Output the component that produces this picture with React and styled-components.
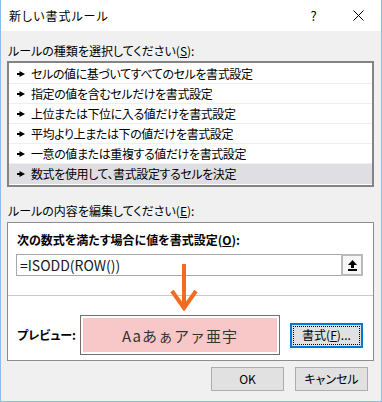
import React from 'react';
import styled, { createGlobalStyle } from 'styled-components';

const GlobalStyle = createGlobalStyle`
  html, body {
    margin: 0;
    padding: 0;
    background: #ffffff;
  }
  body {
    font-family: "Noto Sans CJK JP", "Noto Sans", sans-serif;
    font-size: 12px;
    color: #000;
  }
  * {
    box-sizing: border-box;
  }
`;

const Dialog = styled.div`
  width: 382px;
  height: 402px;
  display: flex;
  flex-direction: column;
  border: 1px solid #8bbcec;
  border-top: none;
  font-feature-settings: "palt";
`;

const TitleBar = styled.div`
  height: 31px;
  flex-shrink: 0;
  display: flex;
  align-items: center;
  background: #ffffff;
  padding-left: 8px;
`;

const TitleText = styled.div`
  line-height: 16px;
  flex: 1;
  letter-spacing: 1px;
`;

const TitleButton = styled.div`
  width: 45px;
  height: 31px;
  display: flex;
  align-items: center;
  justify-content: center;
  font-size: 13px;
`;

const Body = styled.div`
  flex: 1;
  background: #f0f0f0;
  padding: 12px 7px 0 6px;
  display: flex;
  flex-direction: column;
`;

const SectionLabel = styled.div`
  line-height: 16px;
  height: 16px;
  padding-left: 1px;
  margin-top: ${(p) => p.$top || 0}px;
  font-weight: ${(p) => (p.$bold ? 'bold' : 'normal')};
`;

const RuleList = styled.div`
  margin-top: 2px;
  border: 2px solid #848484;
  background: #ffffff;
  padding: 1px 0;
`;

const RuleRow = styled.div`
  height: 20px;
  display: flex;
  align-items: center;
  padding-left: 8px;
  border-bottom: 1px solid ${(p) => (p.$selected ? 'transparent' : '#efefef')};
  background: ${(p) => (p.$selected ? '#dfdee3' : 'transparent')};
  span {
    margin-left: 6px;
    line-height: 16px;
    letter-spacing: -0.4px;
  }
`;

const GroupBox = styled.div`
  position: relative;
  margin-top: 3px;
  border: 1px solid #8c8c8c;
  background: #ffffff;
  padding: 9px 10px 5px 8px;
`;

const FormulaInput = styled.div`
  margin-top: 6px;
  height: 22px;
  border: 1px solid #a8a8a8;
  display: flex;
  align-items: center;
  padding-left: 3px;
  font-size: 14px;
  color: #1a1a1a;
  font-feature-settings: normal;
`;

const RefButton = styled.div`
  margin: -1px -1px -1px auto;
  width: 22px;
  height: 22px;
  border: 2px solid #bababa;
  background: #f7f7f7;
  display: flex;
  align-items: center;
  justify-content: center;
`;

const Separator = styled.div`
  height: 1px;
  background: #cacaca;
  margin: 19px -10px 19px -8px;
`;

const PreviewRow = styled.div`
  height: 40px;
  display: flex;
  align-items: center;
`;

const PreviewLabel = styled.div`
  width: 63px;
  margin-left: 1px;
  font-weight: bold;
  line-height: 16px;
`;

const PreviewBox = styled.div`
  width: 200px;
  height: 40px;
  border: 1px solid #6f6f6f;
  padding: 2px;
  background: #ffffff;
`;

const PreviewFill = styled.div`
  height: 100%;
  background: #f8c8c8;
  display: flex;
  align-items: center;
  justify-content: center;
  font-size: 15px;
  color: #333333;
  letter-spacing: 1px;
  font-feature-settings: normal;
`;

const FormatButton = styled.div`
  position: relative;
  margin-left: 10px;
  width: 73px;
  height: 25px;
  border: 2px solid #0078d7;
  background: #e1e1e1;
  display: flex;
  align-items: center;
  justify-content: center;
  line-height: 16px;
  &::after {
    content: '';
    position: absolute;
    inset: 1px;
    border: 1px dotted #000;
  }
`;

const ArrowMark = styled.svg`
  position: absolute;
  left: 160px;
  top: 39px;
  z-index: 1;
`;

const ButtonRow = styled.div`
  display: flex;
  justify-content: flex-end;
  gap: 11px;
  margin-top: 6px;
  padding-right: 6px;
`;

const DialogButton = styled.div`
  width: 73px;
  height: 24px;
  border: 1px solid #adadad;
  background: #e1e1e1;
  display: flex;
  align-items: center;
  justify-content: center;
  line-height: 16px;
`;

const RowMarker = () => (
  <svg width="8" height="6" viewBox="0 0 8 6">
    <rect x="0" y="2" width="3" height="2" fill="#000" />
    <polygon points="2.5,0 8,3 2.5,6" fill="#000" />
  </svg>
);

const rules = [
  'セルの値に基づいてすべてのセルを書式設定',
  '指定の値を含むセルだけを書式設定',
  '上位または下位に入る値だけを書式設定',
  '平均より上または下の値だけを書式設定',
  '一意の値または重複する値だけを書式設定',
  '数式を使用して、書式設定するセルを決定',
];

const App = () => {
  return (
    <>
      <GlobalStyle />
      <Dialog>
        <TitleBar>
          <TitleText>新しい書式ルール</TitleText>
          <TitleButton>?</TitleButton>
          <TitleButton>
            <svg width="11" height="11" viewBox="0 0 11 11">
              <path d="M0.5 0.5 L10.5 10.5 M10.5 0.5 L0.5 10.5" stroke="#000" strokeWidth="1" />
            </svg>
          </TitleButton>
        </TitleBar>
        <Body>
          <SectionLabel>
            ルールの種類を選択してください(<u>S</u>):
          </SectionLabel>
          <RuleList>
            {rules.map((r, i) => (
              <RuleRow key={r} $selected={i === rules.length - 1}>
                <RowMarker />
                <span>{r}</span>
              </RuleRow>
            ))}
          </RuleList>
          <SectionLabel $top={16}>
            ルールの内容を編集してください(<u>E</u>):
          </SectionLabel>
          <GroupBox>
            <SectionLabel $bold>
              次の数式を満たす場合に値を書式設定(<u>O</u>):
            </SectionLabel>
            <FormulaInput>
              =ISODD(ROW())
              <RefButton>
                <svg width="9" height="11" viewBox="0 0 9 11">
                  <polygon points="4.5,0 9,5 0,5" fill="#000" />
                  <rect x="3" y="5" width="3" height="3" fill="#000" />
                  <rect x="0" y="9" width="9" height="2" fill="#000" />
                </svg>
              </RefButton>
            </FormulaInput>
            <Separator />
            <PreviewRow>
              <PreviewLabel>プレビュー:</PreviewLabel>
              <PreviewBox>
                <PreviewFill>Aaあぁアァ亜宇</PreviewFill>
              </PreviewBox>
              <FormatButton>
                書式(<u>F</u>)...
              </FormatButton>
            </PreviewRow>
            <ArrowMark width="32" height="52" viewBox="0 0 32 52">
              <line x1="16" y1="2" x2="16" y2="44" stroke="#f36a23" strokeWidth="4" />
              <polyline
                points="4,29 16,46 28,29"
                fill="none"
                stroke="#f36a23"
                strokeWidth="4"
                strokeLinejoin="miter"
              />
            </ArrowMark>
          </GroupBox>
          <ButtonRow>
            <DialogButton>OK</DialogButton>
            <DialogButton>キャンセル</DialogButton>
          </ButtonRow>
        </Body>
      </Dialog>
    </>
  );
};

export default App;
